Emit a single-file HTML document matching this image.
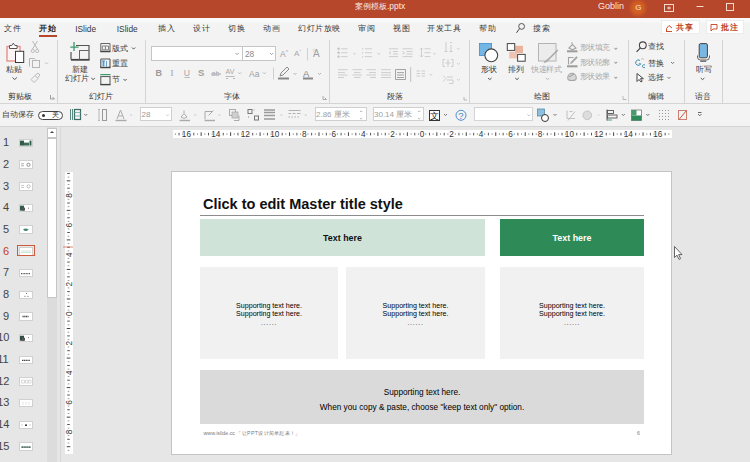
<!DOCTYPE html>
<html><head><meta charset="utf-8">
<style>
*{margin:0;padding:0;box-sizing:border-box}
html,body{width:750px;height:462px;overflow:hidden;background:#e6e6e6;font-family:"Liberation Sans",sans-serif;color:#444}
.a{position:absolute}
.t{position:absolute;white-space:nowrap;line-height:1;z-index:2}
#title{left:0;top:0;width:750px;height:18px;background:#b7472a}
#tabs{left:0;top:18px;width:750px;height:19px;background:linear-gradient(#f9f8f8 0,#f9f8f8 4px,#f3f3f3 5px)}
#ribbon{left:0;top:37px;width:750px;height:66px;background:#f3f3f3}
#qat{left:0;top:103px;width:750px;height:24px;background:#f3f3f3;border-top:1px solid #d4d4d4;border-bottom:1px solid #d4d4d4}
.tab{font-size:8px;color:#383838;top:25px;letter-spacing:0.6px}
.sep{position:absolute;width:1px;background:#d4d4d4}
.gl{font-size:7.5px;color:#333;top:92.8px}
.lbl{font-size:7.8px;color:#3a3a3a}
.dis{color:#a8a8a8}
.chev{position:absolute;width:4px;height:4px;border-right:1px solid #666;border-bottom:1px solid #666;transform:rotate(45deg)}
.dd{position:absolute;width:0;height:0;border-left:2px solid transparent;border-right:2px solid transparent;border-top:2px solid #888}
</style></head><body>
<!-- title bar -->
<div id="title" class="a"></div>
<div class="t" style="left:355px;top:2.3px;font-size:8.4px;color:#fbe9e4">案例模板.pptx</div>
<div class="t" style="left:598px;top:2px;font-size:9px;color:#fbe9e4">Goblin</div>
<div class="a" style="left:628px;top:-2px;width:20px;height:20px;border-radius:50%;background:radial-gradient(circle,#d8621c 0,#d25f22 35%,rgba(183,71,42,0) 70%)"></div>
<div class="t" style="left:635.3px;top:3.8px;font-size:8px;color:#fbe6d8">G</div>

<!-- tabs -->
<div id="tabs" class="a"></div>
<div class="t tab" style="left:4px">文件</div>
<div class="t tab" style="left:39px;font-weight:bold;color:#262626">开始</div>
<div class="a" style="left:39px;top:35px;width:18px;height:2px;background:#b7472a"></div>
<div class="t tab" style="left:75.2px;font-size:8.4px;top:24.8px;letter-spacing:0">ISlide</div>
<div class="t tab" style="left:116.8px;font-size:8.4px;top:24.8px;letter-spacing:0">ISlide</div>
<div class="t tab" style="left:158px">插入</div>
<div class="t tab" style="left:193px">设计</div>
<div class="t tab" style="left:228px">切换</div>
<div class="t tab" style="left:263px">动画</div>
<div class="t tab" style="left:298px">幻灯片放映</div>
<div class="t tab" style="left:358px">审阅</div>
<div class="t tab" style="left:393px">视图</div>
<div class="t tab" style="left:427px">开发工具</div>
<div class="t tab" style="left:479px">帮助</div>
<div class="t tab" style="left:533px">搜索</div>
<div class="a" style="left:661px;top:20px;width:38.5px;height:14px;background:#fff;border:1px solid #ececec"></div>
<div class="t" style="left:676px;top:23.5px;font-size:8px;color:#b8442a;letter-spacing:0.8px;font-weight:bold">共享</div>
<div class="a" style="left:705.5px;top:20px;width:38.5px;height:14px;background:#fff;border:1px solid #ececec"></div>
<div class="t" style="left:721.3px;top:23.5px;font-size:8px;color:#b8442a;letter-spacing:0.8px;font-weight:bold">批注</div>

<!-- ribbon -->
<div id="ribbon" class="a"></div>
<div class="sep" style="left:57px;top:40px;height:62.5px"></div>
<div class="sep" style="left:145px;top:40px;height:62.5px"></div>
<div class="sep" style="left:329px;top:40px;height:62.5px"></div>
<div class="sep" style="left:469px;top:40px;height:62.5px"></div>
<div class="sep" style="left:628px;top:40px;height:62.5px"></div>
<div class="sep" style="left:684px;top:40px;height:62.5px"></div>
<div class="sep" style="left:722px;top:40px;height:62.5px"></div>
<div class="t gl" style="left:8.4px">剪贴板</div>
<div class="t gl" style="left:89.2px">幻灯片</div>
<div class="t gl" style="left:224.3px">字体</div>
<div class="t gl" style="left:386.6px">段落</div>
<div class="t gl" style="left:534.3px">绘图</div>
<div class="t gl" style="left:648.2px">编辑</div>
<div class="t gl" style="left:695.0px">语音</div>


<div class="t lbl" style="left:5.6px;top:65.7px">粘贴</div>
<div class="t lbl" style="left:71.5px;top:65.5px">新建</div>
<div class="t lbl" style="left:64.5px;top:75.2px">幻灯片</div>
<div class="t lbl" style="left:111.6px;top:44.7px">版式</div>
<div class="t lbl" style="left:111.6px;top:60.4px">重置</div>
<div class="t lbl" style="left:112.1px;top:76.1px">节</div>
<div class="t" style="left:245px;top:50px;font-size:8.3px;color:#8a8a8a">28</div>
<div class="t" style="left:280px;top:49.5px;font-size:8.5px;color:#a0a0a0">A<span style="font-size:5px;vertical-align:top">^</span></div>
<div class="t" style="left:294px;top:49.5px;font-size:8px;color:#a8a8a8">A<span style="font-size:5px;vertical-align:top">ˇ</span></div>
<div class="t" style="left:313px;top:48.5px;font-size:10px;color:#a0a0a0">A</div>
<div class="t" style="left:155.5px;top:68.5px;font-size:9px;font-weight:bold;color:#9a9a9a">B</div>
<div class="t" style="left:170.5px;top:68.5px;font-size:9px;font-family:'Liberation Serif',serif;color:#a0a0a0">I</div>
<div class="t" style="left:183.8px;top:68.5px;font-size:8.6px;color:#a8a8a8">U</div>
<div class="t" style="left:198px;top:68px;font-size:9.5px;font-weight:bold;color:#a0a0a0">S</div>
<div class="t" style="left:211.5px;top:70px;font-size:7px;color:#a8a8a8">ab</div>
<div class="t" style="left:225.5px;top:67.5px;font-size:7px;color:#a8a8a8">AV</div>
<div class="t" style="left:249px;top:69.5px;font-size:8.5px;color:#a0a0a0">Aa</div>
<div class="t" style="left:303px;top:68.5px;font-size:9.5px;color:#888">A</div>
<div class="t lbl" style="left:480.6px;top:65.9px">形状</div>
<div class="t lbl" style="left:507.6px;top:65.9px">排列</div>
<div class="t lbl dis" style="left:531.0px;top:65.9px;color:#aaaaaa;letter-spacing:-0.35px">快速样式</div>
<div class="t lbl" style="left:579.5px;top:44.2px;color:#aaaaaa;letter-spacing:-0.35px">形状填充</div>
<div class="t lbl" style="left:579.5px;top:59.3px;color:#aaaaaa;letter-spacing:-0.35px">形状轮廓</div>
<div class="t lbl" style="left:579.5px;top:72.9px;color:#aaaaaa;letter-spacing:-0.35px">形状效果</div>
<div class="t lbl" style="left:648.2px;top:43.4px">查找</div>
<div class="t lbl" style="left:648.2px;top:59.6px">替换</div>
<div class="t lbl" style="left:648.2px;top:74.0px">选择</div>
<div class="t lbl" style="left:695.6px;top:66.2px">听写</div>

<!-- qat -->
<div id="qat" class="a"></div>
<div class="t" style="left:1.5px;top:111px;font-size:7.8px;color:#444">自动保存</div>


<div class="a" style="left:37.5px;top:110.5px;width:25px;height:9px;border:1px solid #444;border-radius:5px;background:#fff"></div>
<div class="a" style="left:41.5px;top:113.5px;width:3.5px;height:3.5px;border-radius:50%;background:#333"></div>
<div class="t" style="left:51.5px;top:111px;font-size:7px;color:#333">关</div>
<div class="a" style="left:139.5px;top:107.3px;width:32.5px;height:14px;border:1px solid #cfcfcf;background:#fff"></div>
<div class="t" style="left:141.5px;top:111px;font-size:8px;color:#999">28</div>
<div class="a" style="left:314.5px;top:107.3px;width:52px;height:14px;border:1px solid #cfcfcf;background:#fff"></div>
<div class="t" style="left:316px;top:110.5px;font-size:8px;color:#a0a0a0">2.86 厘米</div>
<div class="a" style="left:372.5px;top:107.3px;width:51px;height:14px;border:1px solid #cfcfcf;background:#fff"></div>
<div class="t" style="left:374px;top:110.5px;font-size:8px;color:#a0a0a0">30.14 厘米</div>
<div class="a" style="left:474px;top:107.3px;width:58.5px;height:14px;border:1px solid #d4d4d4;background:#fff"></div>

<!-- content -->
<div class="a" style="left:60px;top:127px;width:1px;height:335px;background:#d8d8d8"></div>
<div class="t" style="left:3px;top:137.1px;font-size:11px;color:#444">1</div>
<div class="a" style="left:18.5px;top:138.7px;width:14.5px;height:8.6px;background:#fff;border:0.5px solid #d0d0d0"></div>
<div class="t" style="left:3px;top:158.8px;font-size:11px;color:#444">2</div>
<div class="a" style="left:18.5px;top:160.4px;width:14.5px;height:8.6px;background:#fff;border:0.5px solid #d0d0d0"></div>
<div class="t" style="left:3px;top:180.5px;font-size:11px;color:#444">3</div>
<div class="a" style="left:18.5px;top:182.1px;width:14.5px;height:8.6px;background:#fff;border:0.5px solid #d0d0d0"></div>
<div class="t" style="left:3px;top:202.1px;font-size:11px;color:#444">4</div>
<div class="a" style="left:18.5px;top:203.7px;width:14.5px;height:8.6px;background:#fff;border:0.5px solid #d0d0d0"></div>
<div class="t" style="left:3px;top:223.8px;font-size:11px;color:#444">5</div>
<div class="a" style="left:18.5px;top:225.4px;width:14.5px;height:8.6px;background:#fff;border:0.5px solid #d0d0d0"></div>
<div class="t" style="left:3px;top:245.5px;font-size:11px;color:#c43e1c">6</div>
<div class="a" style="left:18.5px;top:247.1px;width:14.5px;height:8.6px;background:#fff;border:0.5px solid #d0d0d0"></div>
<div class="t" style="left:3px;top:267.2px;font-size:11px;color:#444">7</div>
<div class="a" style="left:18.5px;top:268.8px;width:14.5px;height:8.6px;background:#fff;border:0.5px solid #d0d0d0"></div>
<div class="t" style="left:3px;top:288.9px;font-size:11px;color:#444">8</div>
<div class="a" style="left:18.5px;top:290.5px;width:14.5px;height:8.6px;background:#fff;border:0.5px solid #d0d0d0"></div>
<div class="t" style="left:3px;top:310.5px;font-size:11px;color:#444">9</div>
<div class="a" style="left:18.5px;top:312.1px;width:14.5px;height:8.6px;background:#fff;border:0.5px solid #d0d0d0"></div>
<div class="t" style="left:-2.8px;top:332.2px;font-size:11px;color:#444">10</div>
<div class="a" style="left:18.5px;top:333.8px;width:14.5px;height:8.6px;background:#fff;border:0.5px solid #d0d0d0"></div>
<div class="t" style="left:-2.8px;top:353.9px;font-size:11px;color:#444">11</div>
<div class="a" style="left:18.5px;top:355.5px;width:14.5px;height:8.6px;background:#fff;border:0.5px solid #d0d0d0"></div>
<div class="t" style="left:-2.8px;top:375.6px;font-size:11px;color:#444">12</div>
<div class="a" style="left:18.5px;top:377.2px;width:14.5px;height:8.6px;background:#fff;border:0.5px solid #d0d0d0"></div>
<div class="t" style="left:-2.8px;top:397.3px;font-size:11px;color:#444">13</div>
<div class="a" style="left:18.5px;top:398.9px;width:14.5px;height:8.6px;background:#fff;border:0.5px solid #d0d0d0"></div>
<div class="t" style="left:-2.8px;top:418.9px;font-size:11px;color:#444">14</div>
<div class="a" style="left:18.5px;top:420.5px;width:14.5px;height:8.6px;background:#fff;border:0.5px solid #d0d0d0"></div>
<div class="t" style="left:-2.8px;top:440.6px;font-size:11px;color:#444">15</div>
<div class="a" style="left:18.5px;top:442.2px;width:14.5px;height:8.6px;background:#fff;border:0.5px solid #d0d0d0"></div>
<div class="a" style="left:16.8px;top:244.7px;width:18.6px;height:11.4px;border:1.6px solid #d05a3c"></div>
<div class="a" style="left:47px;top:127px;width:10px;height:335px;background:#dcdcdc"></div>
<div class="a" style="left:47px;top:128px;width:10px;height:10px;background:#fff;border:1px solid #c6c6c6"></div>
<div class="a" style="left:47px;top:138px;width:10px;height:160px;background:#fff;border:1px solid #c6c6c6"></div>
<div class="a" style="left:50px;top:131px;width:0;height:0;border-left:2px solid transparent;border-right:2px solid transparent;border-bottom:2.5px solid #444"></div>
<svg class="a" style="left:0;top:127px" width="750" height="335" viewBox="0 127 750 335">
<rect x="173" y="130" width="499" height="8" fill="#fff"/>
<rect x="174.87" y="133.3" width="1" height="1.6" fill="#999"/>
<rect x="178.56" y="132.8" width="1" height="2.6" fill="#555"/>
<rect x="182.24" y="133.3" width="1" height="1.6" fill="#999"/>
<text x="186.42" y="137.2" font-size="8.2" text-anchor="middle" fill="#333" font-family="Liberation Sans">16</text>
<rect x="189.60" y="133.3" width="1" height="1.6" fill="#999"/>
<rect x="193.29" y="132.8" width="1" height="2.6" fill="#555"/>
<rect x="196.97" y="133.3" width="1" height="1.6" fill="#999"/>
<rect x="200.65" y="132.3" width="1" height="3.6" fill="#444"/>
<rect x="204.33" y="133.3" width="1" height="1.6" fill="#999"/>
<rect x="208.02" y="132.8" width="1" height="2.6" fill="#555"/>
<rect x="211.70" y="133.3" width="1" height="1.6" fill="#999"/>
<text x="215.88" y="137.2" font-size="8.2" text-anchor="middle" fill="#333" font-family="Liberation Sans">14</text>
<rect x="219.06" y="133.3" width="1" height="1.6" fill="#999"/>
<rect x="222.75" y="132.8" width="1" height="2.6" fill="#555"/>
<rect x="226.43" y="133.3" width="1" height="1.6" fill="#999"/>
<rect x="230.11" y="132.3" width="1" height="3.6" fill="#444"/>
<rect x="233.79" y="133.3" width="1" height="1.6" fill="#999"/>
<rect x="237.48" y="132.8" width="1" height="2.6" fill="#555"/>
<rect x="241.16" y="133.3" width="1" height="1.6" fill="#999"/>
<text x="245.34" y="137.2" font-size="8.2" text-anchor="middle" fill="#333" font-family="Liberation Sans">12</text>
<rect x="248.52" y="133.3" width="1" height="1.6" fill="#999"/>
<rect x="252.21" y="132.8" width="1" height="2.6" fill="#555"/>
<rect x="255.89" y="133.3" width="1" height="1.6" fill="#999"/>
<rect x="259.57" y="132.3" width="1" height="3.6" fill="#444"/>
<rect x="263.25" y="133.3" width="1" height="1.6" fill="#999"/>
<rect x="266.94" y="132.8" width="1" height="2.6" fill="#555"/>
<rect x="270.62" y="133.3" width="1" height="1.6" fill="#999"/>
<text x="274.80" y="137.2" font-size="8.2" text-anchor="middle" fill="#333" font-family="Liberation Sans">10</text>
<rect x="277.98" y="133.3" width="1" height="1.6" fill="#999"/>
<rect x="281.67" y="132.8" width="1" height="2.6" fill="#555"/>
<rect x="285.35" y="133.3" width="1" height="1.6" fill="#999"/>
<rect x="289.03" y="132.3" width="1" height="3.6" fill="#444"/>
<rect x="292.71" y="133.3" width="1" height="1.6" fill="#999"/>
<rect x="296.40" y="132.8" width="1" height="2.6" fill="#555"/>
<rect x="300.08" y="133.3" width="1" height="1.6" fill="#999"/>
<text x="304.26" y="137.2" font-size="8.2" text-anchor="middle" fill="#333" font-family="Liberation Sans">8</text>
<rect x="307.44" y="133.3" width="1" height="1.6" fill="#999"/>
<rect x="311.12" y="132.8" width="1" height="2.6" fill="#555"/>
<rect x="314.81" y="133.3" width="1" height="1.6" fill="#999"/>
<rect x="318.49" y="132.3" width="1" height="3.6" fill="#444"/>
<rect x="322.17" y="133.3" width="1" height="1.6" fill="#999"/>
<rect x="325.86" y="132.8" width="1" height="2.6" fill="#555"/>
<rect x="329.54" y="133.3" width="1" height="1.6" fill="#999"/>
<text x="333.72" y="137.2" font-size="8.2" text-anchor="middle" fill="#333" font-family="Liberation Sans">6</text>
<rect x="336.90" y="133.3" width="1" height="1.6" fill="#999"/>
<rect x="340.59" y="132.8" width="1" height="2.6" fill="#555"/>
<rect x="344.27" y="133.3" width="1" height="1.6" fill="#999"/>
<rect x="347.95" y="132.3" width="1" height="3.6" fill="#444"/>
<rect x="351.63" y="133.3" width="1" height="1.6" fill="#999"/>
<rect x="355.32" y="132.8" width="1" height="2.6" fill="#555"/>
<rect x="359.00" y="133.3" width="1" height="1.6" fill="#999"/>
<text x="363.18" y="137.2" font-size="8.2" text-anchor="middle" fill="#333" font-family="Liberation Sans">4</text>
<rect x="366.36" y="133.3" width="1" height="1.6" fill="#999"/>
<rect x="370.05" y="132.8" width="1" height="2.6" fill="#555"/>
<rect x="373.73" y="133.3" width="1" height="1.6" fill="#999"/>
<rect x="377.41" y="132.3" width="1" height="3.6" fill="#444"/>
<rect x="381.09" y="133.3" width="1" height="1.6" fill="#999"/>
<rect x="384.78" y="132.8" width="1" height="2.6" fill="#555"/>
<rect x="388.46" y="133.3" width="1" height="1.6" fill="#999"/>
<text x="392.64" y="137.2" font-size="8.2" text-anchor="middle" fill="#333" font-family="Liberation Sans">2</text>
<rect x="395.82" y="133.3" width="1" height="1.6" fill="#999"/>
<rect x="399.50" y="132.8" width="1" height="2.6" fill="#555"/>
<rect x="403.19" y="133.3" width="1" height="1.6" fill="#999"/>
<rect x="406.87" y="132.3" width="1" height="3.6" fill="#444"/>
<rect x="410.55" y="133.3" width="1" height="1.6" fill="#999"/>
<rect x="414.24" y="132.8" width="1" height="2.6" fill="#555"/>
<rect x="417.92" y="133.3" width="1" height="1.6" fill="#999"/>
<text x="422.10" y="137.2" font-size="8.2" text-anchor="middle" fill="#333" font-family="Liberation Sans">0</text>
<rect x="425.28" y="133.3" width="1" height="1.6" fill="#999"/>
<rect x="428.97" y="132.8" width="1" height="2.6" fill="#555"/>
<rect x="432.65" y="133.3" width="1" height="1.6" fill="#999"/>
<rect x="436.33" y="132.3" width="1" height="3.6" fill="#444"/>
<rect x="440.01" y="133.3" width="1" height="1.6" fill="#999"/>
<rect x="443.70" y="132.8" width="1" height="2.6" fill="#555"/>
<rect x="447.38" y="133.3" width="1" height="1.6" fill="#999"/>
<text x="451.56" y="137.2" font-size="8.2" text-anchor="middle" fill="#333" font-family="Liberation Sans">2</text>
<rect x="454.74" y="133.3" width="1" height="1.6" fill="#999"/>
<rect x="458.43" y="132.8" width="1" height="2.6" fill="#555"/>
<rect x="462.11" y="133.3" width="1" height="1.6" fill="#999"/>
<rect x="465.79" y="132.3" width="1" height="3.6" fill="#444"/>
<rect x="469.47" y="133.3" width="1" height="1.6" fill="#999"/>
<rect x="473.16" y="132.8" width="1" height="2.6" fill="#555"/>
<rect x="476.84" y="133.3" width="1" height="1.6" fill="#999"/>
<text x="481.02" y="137.2" font-size="8.2" text-anchor="middle" fill="#333" font-family="Liberation Sans">4</text>
<rect x="484.20" y="133.3" width="1" height="1.6" fill="#999"/>
<rect x="487.88" y="132.8" width="1" height="2.6" fill="#555"/>
<rect x="491.57" y="133.3" width="1" height="1.6" fill="#999"/>
<rect x="495.25" y="132.3" width="1" height="3.6" fill="#444"/>
<rect x="498.93" y="133.3" width="1" height="1.6" fill="#999"/>
<rect x="502.62" y="132.8" width="1" height="2.6" fill="#555"/>
<rect x="506.30" y="133.3" width="1" height="1.6" fill="#999"/>
<text x="510.48" y="137.2" font-size="8.2" text-anchor="middle" fill="#333" font-family="Liberation Sans">6</text>
<rect x="513.66" y="133.3" width="1" height="1.6" fill="#999"/>
<rect x="517.35" y="132.8" width="1" height="2.6" fill="#555"/>
<rect x="521.03" y="133.3" width="1" height="1.6" fill="#999"/>
<rect x="524.71" y="132.3" width="1" height="3.6" fill="#444"/>
<rect x="528.39" y="133.3" width="1" height="1.6" fill="#999"/>
<rect x="532.08" y="132.8" width="1" height="2.6" fill="#555"/>
<rect x="535.76" y="133.3" width="1" height="1.6" fill="#999"/>
<text x="539.94" y="137.2" font-size="8.2" text-anchor="middle" fill="#333" font-family="Liberation Sans">8</text>
<rect x="543.12" y="133.3" width="1" height="1.6" fill="#999"/>
<rect x="546.81" y="132.8" width="1" height="2.6" fill="#555"/>
<rect x="550.49" y="133.3" width="1" height="1.6" fill="#999"/>
<rect x="554.17" y="132.3" width="1" height="3.6" fill="#444"/>
<rect x="557.85" y="133.3" width="1" height="1.6" fill="#999"/>
<rect x="561.54" y="132.8" width="1" height="2.6" fill="#555"/>
<rect x="565.22" y="133.3" width="1" height="1.6" fill="#999"/>
<text x="569.40" y="137.2" font-size="8.2" text-anchor="middle" fill="#333" font-family="Liberation Sans">10</text>
<rect x="572.58" y="133.3" width="1" height="1.6" fill="#999"/>
<rect x="576.26" y="132.8" width="1" height="2.6" fill="#555"/>
<rect x="579.95" y="133.3" width="1" height="1.6" fill="#999"/>
<rect x="583.63" y="132.3" width="1" height="3.6" fill="#444"/>
<rect x="587.31" y="133.3" width="1" height="1.6" fill="#999"/>
<rect x="591.00" y="132.8" width="1" height="2.6" fill="#555"/>
<rect x="594.68" y="133.3" width="1" height="1.6" fill="#999"/>
<text x="598.86" y="137.2" font-size="8.2" text-anchor="middle" fill="#333" font-family="Liberation Sans">12</text>
<rect x="602.04" y="133.3" width="1" height="1.6" fill="#999"/>
<rect x="605.73" y="132.8" width="1" height="2.6" fill="#555"/>
<rect x="609.41" y="133.3" width="1" height="1.6" fill="#999"/>
<rect x="613.09" y="132.3" width="1" height="3.6" fill="#444"/>
<rect x="616.77" y="133.3" width="1" height="1.6" fill="#999"/>
<rect x="620.46" y="132.8" width="1" height="2.6" fill="#555"/>
<rect x="624.14" y="133.3" width="1" height="1.6" fill="#999"/>
<text x="628.32" y="137.2" font-size="8.2" text-anchor="middle" fill="#333" font-family="Liberation Sans">14</text>
<rect x="631.50" y="133.3" width="1" height="1.6" fill="#999"/>
<rect x="635.19" y="132.8" width="1" height="2.6" fill="#555"/>
<rect x="638.87" y="133.3" width="1" height="1.6" fill="#999"/>
<rect x="642.55" y="132.3" width="1" height="3.6" fill="#444"/>
<rect x="646.23" y="133.3" width="1" height="1.6" fill="#999"/>
<rect x="649.91" y="132.8" width="1" height="2.6" fill="#555"/>
<rect x="653.60" y="133.3" width="1" height="1.6" fill="#999"/>
<text x="657.78" y="137.2" font-size="8.2" text-anchor="middle" fill="#333" font-family="Liberation Sans">16</text>
<rect x="660.96" y="133.3" width="1" height="1.6" fill="#999"/>
<rect x="664.64" y="132.8" width="1" height="2.6" fill="#555"/>
<rect x="668.33" y="133.3" width="1" height="1.6" fill="#999"/>
<rect x="65" y="172" width="8" height="282" fill="#fff"/>
<rect x="67.2" y="172.94" width="2.6" height="1" fill="#555"/>
<rect x="67.7" y="176.63" width="1.6" height="1" fill="#999"/>
<rect x="66.7" y="180.32" width="3.6" height="1" fill="#444"/>
<rect x="67.7" y="184.01" width="1.6" height="1" fill="#999"/>
<rect x="67.2" y="187.70" width="2.6" height="1" fill="#555"/>
<rect x="67.7" y="191.40" width="1.6" height="1" fill="#999"/>
<text x="0" y="0" font-size="8.2" text-anchor="middle" fill="#333" font-family="Liberation Sans" transform="translate(71.6 195.59) rotate(-90)">8</text>
<rect x="67.7" y="198.78" width="1.6" height="1" fill="#999"/>
<rect x="67.2" y="202.48" width="2.6" height="1" fill="#555"/>
<rect x="67.7" y="206.17" width="1.6" height="1" fill="#999"/>
<rect x="66.7" y="209.86" width="3.6" height="1" fill="#444"/>
<rect x="67.7" y="213.55" width="1.6" height="1" fill="#999"/>
<rect x="67.2" y="217.25" width="2.6" height="1" fill="#555"/>
<rect x="67.7" y="220.94" width="1.6" height="1" fill="#999"/>
<text x="0" y="0" font-size="8.2" text-anchor="middle" fill="#333" font-family="Liberation Sans" transform="translate(71.6 225.13) rotate(-90)">6</text>
<rect x="67.7" y="228.32" width="1.6" height="1" fill="#999"/>
<rect x="67.2" y="232.01" width="2.6" height="1" fill="#555"/>
<rect x="67.7" y="235.71" width="1.6" height="1" fill="#999"/>
<rect x="66.7" y="239.40" width="3.6" height="1" fill="#444"/>
<rect x="67.7" y="243.09" width="1.6" height="1" fill="#999"/>
<rect x="67.2" y="246.78" width="2.6" height="1" fill="#555"/>
<rect x="67.7" y="250.48" width="1.6" height="1" fill="#999"/>
<text x="0" y="0" font-size="8.2" text-anchor="middle" fill="#333" font-family="Liberation Sans" transform="translate(71.6 254.67) rotate(-90)">4</text>
<rect x="67.7" y="257.86" width="1.6" height="1" fill="#999"/>
<rect x="67.2" y="261.56" width="2.6" height="1" fill="#555"/>
<rect x="67.7" y="265.25" width="1.6" height="1" fill="#999"/>
<rect x="66.7" y="268.94" width="3.6" height="1" fill="#444"/>
<rect x="67.7" y="272.63" width="1.6" height="1" fill="#999"/>
<rect x="67.2" y="276.32" width="2.6" height="1" fill="#555"/>
<rect x="67.7" y="280.02" width="1.6" height="1" fill="#999"/>
<text x="0" y="0" font-size="8.2" text-anchor="middle" fill="#333" font-family="Liberation Sans" transform="translate(71.6 284.21) rotate(-90)">2</text>
<rect x="67.7" y="287.40" width="1.6" height="1" fill="#999"/>
<rect x="67.2" y="291.10" width="2.6" height="1" fill="#555"/>
<rect x="67.7" y="294.79" width="1.6" height="1" fill="#999"/>
<rect x="66.7" y="298.48" width="3.6" height="1" fill="#444"/>
<rect x="67.7" y="302.17" width="1.6" height="1" fill="#999"/>
<rect x="67.2" y="305.87" width="2.6" height="1" fill="#555"/>
<rect x="67.7" y="309.56" width="1.6" height="1" fill="#999"/>
<text x="0" y="0" font-size="8.2" text-anchor="middle" fill="#333" font-family="Liberation Sans" transform="translate(71.6 313.75) rotate(-90)">0</text>
<rect x="67.7" y="316.94" width="1.6" height="1" fill="#999"/>
<rect x="67.2" y="320.63" width="2.6" height="1" fill="#555"/>
<rect x="67.7" y="324.33" width="1.6" height="1" fill="#999"/>
<rect x="66.7" y="328.02" width="3.6" height="1" fill="#444"/>
<rect x="67.7" y="331.71" width="1.6" height="1" fill="#999"/>
<rect x="67.2" y="335.40" width="2.6" height="1" fill="#555"/>
<rect x="67.7" y="339.10" width="1.6" height="1" fill="#999"/>
<text x="0" y="0" font-size="8.2" text-anchor="middle" fill="#333" font-family="Liberation Sans" transform="translate(71.6 343.29) rotate(-90)">2</text>
<rect x="67.7" y="346.48" width="1.6" height="1" fill="#999"/>
<rect x="67.2" y="350.18" width="2.6" height="1" fill="#555"/>
<rect x="67.7" y="353.87" width="1.6" height="1" fill="#999"/>
<rect x="66.7" y="357.56" width="3.6" height="1" fill="#444"/>
<rect x="67.7" y="361.25" width="1.6" height="1" fill="#999"/>
<rect x="67.2" y="364.94" width="2.6" height="1" fill="#555"/>
<rect x="67.7" y="368.64" width="1.6" height="1" fill="#999"/>
<text x="0" y="0" font-size="8.2" text-anchor="middle" fill="#333" font-family="Liberation Sans" transform="translate(71.6 372.83) rotate(-90)">4</text>
<rect x="67.7" y="376.02" width="1.6" height="1" fill="#999"/>
<rect x="67.2" y="379.72" width="2.6" height="1" fill="#555"/>
<rect x="67.7" y="383.41" width="1.6" height="1" fill="#999"/>
<rect x="66.7" y="387.10" width="3.6" height="1" fill="#444"/>
<rect x="67.7" y="390.79" width="1.6" height="1" fill="#999"/>
<rect x="67.2" y="394.49" width="2.6" height="1" fill="#555"/>
<rect x="67.7" y="398.18" width="1.6" height="1" fill="#999"/>
<text x="0" y="0" font-size="8.2" text-anchor="middle" fill="#333" font-family="Liberation Sans" transform="translate(71.6 402.37) rotate(-90)">6</text>
<rect x="67.7" y="405.56" width="1.6" height="1" fill="#999"/>
<rect x="67.2" y="409.25" width="2.6" height="1" fill="#555"/>
<rect x="67.7" y="412.95" width="1.6" height="1" fill="#999"/>
<rect x="66.7" y="416.64" width="3.6" height="1" fill="#444"/>
<rect x="67.7" y="420.33" width="1.6" height="1" fill="#999"/>
<rect x="67.2" y="424.02" width="2.6" height="1" fill="#555"/>
<rect x="67.7" y="427.72" width="1.6" height="1" fill="#999"/>
<text x="0" y="0" font-size="8.2" text-anchor="middle" fill="#333" font-family="Liberation Sans" transform="translate(71.6 431.91) rotate(-90)">8</text>
<rect x="67.7" y="435.10" width="1.6" height="1" fill="#999"/>
<rect x="67.2" y="438.80" width="2.6" height="1" fill="#555"/>
<rect x="67.7" y="442.49" width="1.6" height="1" fill="#999"/>
<rect x="66.7" y="446.18" width="3.6" height="1" fill="#444"/>
<rect x="67.7" y="449.87" width="1.6" height="1" fill="#999"/>
<rect x="63" y="246.5" width="10" height="1" fill="#d86a50" opacity="0.8"/>
</svg>
<svg class="a" style="left:0;top:127px" width="60" height="335" viewBox="0 127 60 335">
<rect x="20" y="140.60000000000002" width="4" height="5" fill="#2f5e48"/><rect x="24" y="142.60000000000002" width="5" height="3" fill="#3f6e58"/><rect x="29.5" y="140.60000000000002" width="2" height="5" fill="#2f5e48"/>
<path d="M21 163.78000000000003h3M21 165.78000000000003h3" stroke="#999" stroke-width="0.8"/><circle cx="28.5" cy="164.78000000000003" r="1.6" fill="none" stroke="#777" stroke-width="0.8"/>
<path d="M21 185.46000000000004h3M21 187.46000000000004h3" stroke="#bbb" stroke-width="0.8"/><circle cx="28.5" cy="186.46000000000004" r="1.6" fill="none" stroke="#aaa" stroke-width="0.8"/>
<rect x="20" y="205.64000000000001" width="4" height="5" fill="#2f5e48"/><rect x="22" y="207.64000000000001" width="3" height="3" fill="#555"/><rect x="28" y="207.64000000000001" width="1" height="1" fill="#777"/>
<path d="M23 229.82000000000002q2.8-2.5 5.6 0q-2.8 2.5-5.6 0z" fill="#3d8a6a"/>
<path d="M21 251.00000000000003h10M21 252.50000000000003h10" stroke="#cfe3d8" stroke-width="1"/>
<path d="M21 273.68h9" stroke="#555" stroke-width="1.2" stroke-dasharray="1 0.6"/>
<path d="M24.5 296.36h1M26 293.36h1M27.5 296.36h1" stroke="#666" stroke-width="1"/>
<path d="M22.5 316.54h6" stroke="#444" stroke-width="1.6" stroke-dasharray="1.2 0.5"/>
<rect x="20" y="335.72" width="4" height="5" fill="#2f4e40"/><rect x="22" y="337.72" width="3" height="3" fill="#555"/><rect x="28" y="337.22" width="1" height="1" fill="#777"/>
<path d="M22 360.40000000000003h8" stroke="#444" stroke-width="1.4" stroke-dasharray="1.3 0.5"/>
<path d="M21.5 380.08h3v3h-3zM25.5 380.08h2.5v3h-2.5zM28.5 380.08h2.5v3h-2.5z" fill="none" stroke="#c4c4c4" stroke-width="0.6"/>
<path d="M23 401.76v3M26 401.76v3M29 401.76v3" stroke="#d4d4d4" stroke-width="0.7"/>
<rect x="25" y="424.44" width="2" height="1.5" fill="#333"/><path d="M21 424.94h2M29 424.94h2" stroke="#bbb" stroke-width="0.6"/>
<path d="M21.5 447.12h9" stroke="#3f5f55" stroke-width="1.8" stroke-dasharray="1.4 0.5"/>
</svg>
<!-- h ruler -->

<!-- v ruler -->


<!-- slide -->
<div class="a" style="left:171px;top:171px;width:501px;height:284px;background:#fff;border:1px solid #c4c4c4"></div>
<div class="t" style="left:203px;top:197.3px;font-size:14.5px;font-weight:bold;color:#111">Click to edit Master title style</div>
<div class="a" style="left:200px;top:215px;width:444px;height:1px;background:#8c8c8c"></div>
<div class="a" style="left:200px;top:219px;width:285px;height:37px;background:#cfe3d8"></div>
<div class="a" style="left:500px;top:219px;width:144px;height:37px;background:#2e8a57"></div>
<div class="t" style="left:200px;top:233.5px;width:285px;text-align:center;font-size:8.9px;font-weight:bold;color:#111">Text here</div>
<div class="t" style="left:500px;top:233.5px;width:144px;text-align:center;font-size:8.9px;font-weight:bold;color:#fff">Text here</div>
<div class="a" style="left:200px;top:267px;width:138px;height:92px;background:#f1f1f1"></div>
<div class="a" style="left:346px;top:267px;width:139px;height:92px;background:#f1f1f1"></div>
<div class="a" style="left:500px;top:267px;width:144px;height:92px;background:#f1f1f1"></div>
<div class="a" style="left:200px;top:370.3px;width:444px;height:53.5px;background:#d9dad9"></div>
<div class="t" style="left:200px;top:388.9px;width:444px;text-align:center;font-size:8.25px;color:#000">Supporting text here.</div>
<div class="t" style="left:200px;top:404px;width:444px;text-align:center;font-size:8.25px;color:#000">When you copy &amp; paste, choose "keep text only" option.</div>

<svg class="a" style="left:0;top:0" width="750" height="127" viewBox="0 0 750 127">
<!-- title bar icons -->
<rect x="664.5" y="4.5" width="9" height="7" fill="none" stroke="#f6d9d0" stroke-width="1"/>
<path d="M667 8h4M669 6.5v3" stroke="#f6d9d0" stroke-width="1"/>
<path d="M696.5 6.5h7" stroke="#f6d9d0" stroke-width="1"/>
<rect x="726.5" y="3.5" width="7" height="7" fill="none" stroke="#f6d9d0" stroke-width="1"/>
<!-- search icon -->
<circle cx="521.6" cy="26.4" r="2.9" fill="none" stroke="#444" stroke-width="0.9"/>
<path d="M519.5 28.6L516.5 32.8" stroke="#444" stroke-width="1"/>
<!-- share/comment icons -->
<path d="M666 31.5h6M666.5 31v-2.5l2.5-3 3 2.5" fill="none" stroke="#c43e1c" stroke-width="0.9"/>
<path d="M711 24.5h6v4.5h-4l-2 2z" fill="none" stroke="#c43e1c" stroke-width="0.9"/>

<!-- paste -->
<rect x="7" y="46.5" width="13" height="14.5" fill="#fdf5f4" stroke="#e3928a" stroke-width="1.4"/>
<path d="M9.5 48.5V45.5h2.2l1.6-2.3 1.6 2.3h2.2v3z" fill="#fff" stroke="#555" stroke-width="1"/>
<rect x="15.5" y="51.3" width="8.2" height="11.2" fill="#fff" stroke="#3a3a3a" stroke-width="1"/>
<path d="M12.5 77.5l2.2 2 2.2-2" fill="none" stroke="#555" stroke-width="1"/>
<!-- cut -->
<path d="M32.5 41l5 8M37.5 41l-5 8" stroke="#b8b8b8" stroke-width="1"/>
<circle cx="32.8" cy="51" r="1.6" fill="none" stroke="#b8b8b8" stroke-width="0.9"/>
<circle cx="37.2" cy="51" r="1.6" fill="none" stroke="#b8b8b8" stroke-width="0.9"/>
<!-- copy -->
<path d="M29.5 66.5v-8h5l1 1" fill="none" stroke="#b5b5b5" stroke-width="1"/>
<rect x="32.5" y="60.5" width="7" height="7" fill="#f3f3f3" stroke="#b5b5b5" stroke-width="1"/>
<path d="M45 62.5l1.5 1.5 1.5-1.5" fill="none" stroke="#bbb" stroke-width="0.9"/>
<!-- painter -->
<path d="M31 79.5l4-4 3 3-4 4z M35 75.5l3-2.5 2 2-2.5 3" fill="none" stroke="#b8b8b8" stroke-width="1"/>
<!-- launcher -->
<path d="M50.5 95v4h4M52.5 97l2 2" fill="none" stroke="#888" stroke-width="0.8"/>

<!-- new slide -->
<path d="M76 45.5h13v14M71 59.5h18.5" fill="none" stroke="#555" stroke-width="1.2"/>
<path d="M71 52v7.5" stroke="#555" stroke-width="1.2"/>
<path d="M71 59.8h18.5" stroke="#444" stroke-width="1.8"/>
<path d="M79.5 50v9.5M79.5 50.5h9.5" fill="none" stroke="#666" stroke-width="1"/>
<path d="M74 42v9M70.3 47.2h8.2" stroke="#3a9a6a" stroke-width="1.3"/>
<path d="M91.3 78l1.8 1.6 1.8-1.6" fill="none" stroke="#555" stroke-width="1"/>
<!-- layout -->
<path d="M100.8 43.5h9.2M100.8 43.5v8M110 43.5v8" fill="none" stroke="#666" stroke-width="1"/>
<path d="M100.3 51.5h10.2" stroke="#444" stroke-width="1.5"/>
<path d="M102.3 46h6.2v3.8h-6.2zM105.4 46v3.8" fill="none" stroke="#777" stroke-width="0.9"/>
<path d="M132 47.5l1.6 1.6 1.6-1.6" fill="none" stroke="#555" stroke-width="1"/>
<!-- reset -->
<path d="M100.8 59h9.2M100.8 59v8.5M110 59v8.5" fill="none" stroke="#555" stroke-width="1.1"/>
<path d="M100.3 67.5h10.2" stroke="#444" stroke-width="1.5"/>
<rect x="101.8" y="60.5" width="3.2" height="6" fill="#a9cde6"/>
<path d="M102 61h3M103.5 61v5.5M106.5 61v5.5" stroke="#4a88b8" stroke-width="0.8"/>
<!-- section -->
<path d="M100.3 74.6h10.2" stroke="#3a9a6a" stroke-width="1.2"/>
<path d="M100.3 76.6h10.2" stroke="#555" stroke-width="1"/>
<path d="M100.8 76.6v8M110 76.6v8" fill="none" stroke="#555" stroke-width="1"/>
<path d="M100.3 84.6h10.2" stroke="#444" stroke-width="1.4"/>
<path d="M123.5 79l1.6 1.6 1.6-1.6" fill="none" stroke="#555" stroke-width="1"/>

<!-- font boxes -->
<rect x="151.5" y="46.5" width="91" height="14" fill="#fff" stroke="#c6c6c6" stroke-width="1"/>
<rect x="242.5" y="46.5" width="33" height="14" fill="#fff" stroke="#c6c6c6" stroke-width="1"/>
<path d="M235.5 53l1.6 1.6 1.6-1.6M270 53l1.6 1.6 1.6-1.6" fill="none" stroke="#999" stroke-width="0.9"/>
<path d="M312.5 50.5l2 -2M313 52l2 -2" stroke="#bbb" stroke-width="0.5"/>
<path d="M273.5 67.5v12M307.5 48v12.5" stroke="#d0d0d0" stroke-width="1"/>
<path d="M238.5 72.5l1.3 1.3 1.3-1.3M263 72.5l1.3 1.3 1.3-1.3M293.5 73l1.5 1.5 1.5-1.5M318 73l1.5 1.5 1.5-1.5" fill="none" stroke="#aaa" stroke-width="0.9"/>
<!-- highlighter -->
<path d="M280 76l1-3 6-6 2 2-6 6z" fill="none" stroke="#8a8a8a" stroke-width="1"/>
<rect x="278" y="77.5" width="11" height="2" fill="#888"/>
<rect x="303" y="77.5" width="10" height="2" fill="#888"/>
<path d="M211 74h10" stroke="#999" stroke-width="0.8"/>
<path d="M225.5 76.5h9M226 78.5h2M233 78.5h2" stroke="#aaa" stroke-width="0.8"/>
<path d="M184.5 77.5h5.5" stroke="#aaa" stroke-width="0.8"/>
<!-- launcher -->
<path d="M323 96v3.5h3.5M324.5 97.5l2 2" fill="none" stroke="#999" stroke-width="0.8"/>

<!-- paragraph icons (faint) -->
<g stroke="#c9c9c9" stroke-width="0.9" fill="none">
<circle cx="338.6" cy="48.8" r="0.9" fill="#bbb"/><circle cx="338.6" cy="52.7" r="0.9" fill="#bbb"/><circle cx="338.6" cy="56.6" r="0.9" fill="#bbb"/>
<path d="M341 48.8h6.5M341 52.7h6.5M341 56.6h6.5"/>
<path d="M353 53l1.4 1.4 1.4-1.4"/>
<path d="M362.7 48v1.5M362.5 52v1.5M362.7 56v1.5M365 48.8h7M365 52.7h7M365 56.6h7"/>
<path d="M377.3 53l1.4 1.4 1.4-1.4"/>
<path d="M389 48.8h9M393 51.5h5M393 54h5M389 56.6h9M391 51.5l-2 1.3 2 1.3"/>
<path d="M402.5 48.8h10M406.5 51.5h6M406.5 54h6M402.5 56.6h10M402.5 51.5l2 1.3-2 1.3"/>
<path d="M421.5 48v9M420 49.5l1.5-1.5 1.5 1.5M420 55.5l1.5 1.5 1.5-1.5M424.5 48.8h6M424.5 52.7h6M424.5 56.6h6"/>
<path d="M433 53l1.4 1.4 1.4-1.4"/>
<path d="M446 42v9.5M451 45v6.5M450 43l1-1 1 1M444.5 51.5h3M449.5 51.5h3"/>
<path d="M457 48l1.4 1.4 1.4-1.4"/>
<path d="M443 59.5v7M453 59.5v7M443 59.5h2M443 66.5h2M451 59.5h2M451 66.5h2M448 59v8M445.5 63h5"/>
<path d="M457 63l1.4 1.4 1.4-1.4"/>
<path d="M443 75.5l3 3-3 3M447 77h6M447 80h6v3.5h-4"/>
<path d="M457 79l1.4 1.4 1.4-1.4"/>
<path d="M338 69.7h9.5M338 72.6h7M338 75h9.5M338 77.5h6"/>
<path d="M352.5 69.7h9.5M354 72.6h6.5M352.5 75h9.5M354 77.5h6.5"/>
<path d="M366.5 69.7h9.5M369 72.6h7M366.5 75h9.5M370 77.5h6"/>
<path d="M381 69.7h10M381 72.6h10M381 75h10M381 77.5h10"/>
<path d="M395.5 69.5h10v10h-10z M397 72.6h7M397 75h7M397 77.5h7" stroke="#9a9a9a"/>
<path d="M410.7 67v15" stroke="#bbb"/>
<path d="M416.5 71h3.5M416.5 73.5h3.5M416.5 76h3.5M421.5 71h3.5M421.5 73.5h3.5M421.5 76h3.5"/>
<path d="M429.5 74l1.4 1.4 1.4-1.4"/>
</g>
<path d="M464 97v3h3" fill="none" stroke="#aaa" stroke-width="0.8"/>

<!-- shapes -->
<rect x="479.5" y="43.5" width="12" height="12" fill="#74b6e6" stroke="#3f8ccc" stroke-width="0.8"/>
<circle cx="491.3" cy="55.3" r="6.4" fill="#fff" stroke="#444" stroke-width="1.1"/>
<path d="M488 78l1.8 1.6 1.8-1.6" fill="none" stroke="#555" stroke-width="1"/>
<!-- arrange -->
<rect x="515.2" y="45.8" width="7.8" height="7.2" fill="#e9b49b"/>
<rect x="509.2" y="51.8" width="7.8" height="6.6" fill="#ecc4b1"/>
<rect x="507.3" y="43.6" width="7.4" height="6.8" fill="#fff" stroke="#444" stroke-width="1"/>
<rect x="517.6" y="54.4" width="7.6" height="6.8" fill="#fff" stroke="#444" stroke-width="1"/>
<path d="M515.2 78l1.8 1.6 1.8-1.6" fill="none" stroke="#555" stroke-width="1"/>
<!-- quick styles -->
<rect x="538.5" y="43.5" width="17.5" height="17.5" fill="#ececec" stroke="#b4b4b4" stroke-width="1"/>
<path d="M557.8 50l-9 9" stroke="#a8a8a8" stroke-width="1.6"/>
<path d="M548.5 58.5l-3 2.5-1.5 1.5 2.8-0.8 2.2-2.2z" fill="#a8a8a8" stroke="#a8a8a8" stroke-width="0.8"/>
<path d="M545.8 78l1.8 1.6 1.8-1.6" fill="none" stroke="#bbb" stroke-width="1"/>
<!-- shape fill/outline/effects -->
<g stroke="#a4a4a4" fill="none" stroke-width="1.1">
<path d="M569 48l3.5-3.5 3.5 3.5-3.5 1.8z M572 44.2v-2"/>
<path d="M568.5 64.5v-7h5M576.5 57l-5 5-1 1.5 1.5-1 5-5z"/>
<path d="M567.8 77.5a4.2 4.2 0 0 1 8.4 0v1a4.2 2 0 0 1-8.4 0z" fill="#d8d8d8"/>
<path d="M569 77l5-3" />
<path d="M614.5 48l1.3 1.3 1.3-1.3M614.5 62l1.3 1.3 1.3-1.3M614.5 77l1.3 1.3 1.3-1.3"/>
</g>
<rect x="567" y="50.3" width="10.5" height="2" fill="#9c9c9c"/>
<rect x="567" y="65.3" width="10.5" height="2" fill="#9c9c9c"/>
<path d="M623 96v3.5h3.5" fill="none" stroke="#aaa" stroke-width="0.8"/>
<!-- find -->
<circle cx="642.8" cy="45.3" r="3.4" fill="none" stroke="#444" stroke-width="1.1"/>
<path d="M640.4 47.8l-3.8 4" stroke="#444" stroke-width="1.2"/>
<!-- replace -->
<path d="M640 60.5a2.7 2.7 0 1 0 0.8 3.3h-2" fill="none" stroke="#3a8fb5" stroke-width="1"/>
<path d="M645 65.2a1.5 1.5 0 1 0 0 2" fill="none" stroke="#3a8fb5" stroke-width="0.9"/>
<path d="M641 59.5l1.5-1 1.5 1" fill="none" stroke="#aaa" stroke-width="0.7"/>
<path d="M671 62l1.6 1.6 1.6-1.6" fill="none" stroke="#666" stroke-width="0.9"/>
<!-- select -->
<path d="M637 73.5v8l2-2 2 2.5 1.2-.8-1.8-2.5h3z" fill="#fff" stroke="#444" stroke-width="1"/>
<path d="M667.5 77l1.5 1.5 1.5-1.5" fill="none" stroke="#666" stroke-width="0.9"/>
<!-- dictate -->
<rect x="699.2" y="43.6" width="8.2" height="14.2" rx="1.5" fill="#78b7e2" stroke="#444" stroke-width="1"/>
<path d="M697.5 55.5v1.5a3 3 0 0 0 3 3h6a3 3 0 0 0 3-3v-1.5" fill="none" stroke="#555" stroke-width="0.9"/>
<path d="M700.2 61.2h6" stroke="#444" stroke-width="1"/>
<path d="M700.8 78l1.8 1.6 1.8-1.6" fill="none" stroke="#555" stroke-width="1"/>
</svg>

<svg class="a" style="left:0;top:103px" width="750" height="24" viewBox="0 103 750 24">
<!-- icon1 table teal -->
<path d="M70.5 109v11M72.5 109v11" stroke="#5a8a80" stroke-width="1"/>
<rect x="74.5" y="109.5" width="6" height="10" fill="none" stroke="#3f6b66" stroke-width="1.2"/>
<path d="M74.5 112.5h6M74.5 116h6" stroke="#6aa" stroke-width="0.8"/>
<path d="M84.3 114l1.5 1.5 1.5-1.5" fill="none" stroke="#666" stroke-width="0.9"/>
<!-- textbox -->
<path d="M98 109.5h2M99 109.5v11M98 120.5h2" stroke="#aaa" stroke-width="0.8"/>
<rect x="102.5" y="109.5" width="4" height="11" fill="none" stroke="#999" stroke-width="1"/>
<!-- A -->
<path d="M117 119l3.5-9 3.5 9M118.5 116h4" fill="none" stroke="#aaa" stroke-width="1"/>
<path d="M115.5 120.5h11" stroke="#aaa" stroke-width="1.4"/>
<path d="M130 115h2" stroke="#bbb" stroke-width="0.8"/>
<path d="M166.3 114.5l1.3 1.3 1.3-1.3" fill="none" stroke="#bbb" stroke-width="0.8"/>
<!-- fill -->
<path d="M181 117l3-3.5 3 3.5-3 1.5z M184 113v-2.5" fill="none" stroke="#aaa" stroke-width="1"/>
<path d="M179.6 120.5h10.4" stroke="#aaa" stroke-width="1.4"/>
<path d="M194.3 115h2" stroke="#bbb" stroke-width="0.8"/>
<!-- outline -->
<path d="M205 119.5v-8h7M213.5 110.5l-5 5" fill="none" stroke="#aaa" stroke-width="1"/>
<path d="M204.7 120.5h10.3" stroke="#aaa" stroke-width="1.4"/>
<path d="M218.5 115h2" stroke="#bbb" stroke-width="0.8"/>
<!-- group -->
<rect x="229.5" y="109.5" width="6" height="6" fill="none" stroke="#aaa" stroke-width="1"/>
<rect x="232" y="112" width="6" height="6" fill="#cfcfcf" stroke="#aaa" stroke-width="0.8"/>
<path d="M234 120.5h5v-5" fill="none" stroke="#aaa" stroke-width="1"/>
<!-- align -->
<rect x="248" y="109.5" width="4" height="4" fill="none" stroke="#777" stroke-width="1"/>
<rect x="254.5" y="116" width="4" height="4" fill="none" stroke="#777" stroke-width="1"/>
<path d="M253.5 110h1.5M248.5 116v2" stroke="#aaa" stroke-width="0.8"/>
<!-- line weight -->
<path d="M264 110h11M264 112.5h11M264 115.5h11M264 119h11" stroke="#9a9a9a" stroke-width="1.6"/>
<path d="M280.5 115h2" stroke="#bbb" stroke-width="0.8"/>
<!-- dash -->
<path d="M288.5 110.5h12M288.5 113.5h2.5M292.5 113.5h3M297 113.5h3.5M288.5 117h1.5M291.5 117h1.5M294.5 117h1.5M297.5 117h1.5" stroke="#aaa" stroke-width="0.9"/>
<path d="M304.7 115h2" stroke="#bbb" stroke-width="0.8"/>
<!-- spinners -->
<path d="M360 112l1.2-1.2 1.2 1.2M360 118l1.2 1.2 1.2-1.2M418 112l1.2-1.2 1.2 1.2M418 118l1.2 1.2 1.2-1.2" fill="none" stroke="#aaa" stroke-width="0.8"/>
<!-- wen -->
<rect x="429.5" y="110.5" width="10" height="10" fill="#fff" stroke="#333" stroke-width="1"/>
<text x="430" y="119" font-size="9" fill="#222" font-family="Liberation Sans">文</text>
<path d="M444 114l1.5 1.5 1.5-1.5" fill="none" stroke="#666" stroke-width="0.9"/>
<!-- help -->
<circle cx="461" cy="115.3" r="5" fill="none" stroke="#3b87c8" stroke-width="0.9"/>
<text x="461" y="119" font-size="9.5" text-anchor="middle" fill="#3b87c8" font-family="Liberation Sans">?</text>
<path d="M527.5 114.5l1.3 1.3 1.3-1.3" fill="none" stroke="#aac" stroke-width="0.8"/>
<!-- shape -->
<rect x="537.5" y="109" width="7" height="7" fill="#8cc0de" stroke="#5a8aa8" stroke-width="0.8"/>
<circle cx="545" cy="118" r="3.5" fill="#fff" stroke="#333" stroke-width="1"/>
<path d="M553.5 114l1.5 1.5 1.5-1.5" fill="none" stroke="#666" stroke-width="0.9"/>
<!-- crop -->
<path d="M567 110.5v8h8M568 120.5l7-9M569.5 111.5h3" fill="none" stroke="#bbb" stroke-width="0.9"/>
<!-- circle -->
<circle cx="587.3" cy="115.3" r="4.3" fill="#ddd" stroke="#c4c4c4" stroke-width="1"/>
<path d="M597.5 115h2" stroke="#ccc" stroke-width="0.8"/>
<!-- align2 -->
<path d="M607 109.5v11" stroke="#555" stroke-width="1"/>
<rect x="607.5" y="110.5" width="6" height="3" fill="none" stroke="#555" stroke-width="0.9"/>
<rect x="607.5" y="115" width="9.5" height="3" fill="none" stroke="#555" stroke-width="0.9"/>
<path d="M607 120h5" stroke="#3a9a6a" stroke-width="0.9"/>
<path d="M621.8 114l1.5 1.5 1.5-1.5" fill="none" stroke="#666" stroke-width="0.9"/>
<!-- green square -->
<rect x="631.5" y="110" width="10" height="10.5" fill="#ffffff" stroke="#777" stroke-width="0.8"/>
<rect x="631.5" y="115.5" width="10" height="5" fill="#2e8a57"/>
<rect x="631.5" y="110" width="5" height="5.5" fill="#4a9a6e"/>
<path d="M646.3 114l1.5 1.5 1.5-1.5" fill="none" stroke="#666" stroke-width="0.9"/>
<!-- dotted grid -->
<g fill="#999">
<rect x="659" y="110" width="1" height="1"/><rect x="662" y="110" width="1" height="1"/><rect x="665" y="110" width="1" height="1"/><rect x="668" y="110" width="1" height="1"/>
<rect x="659" y="113" width="1" height="1"/><rect x="662" y="113" width="1" height="1"/><rect x="665" y="113" width="1" height="1"/><rect x="668" y="113" width="1" height="1"/>
<rect x="659" y="116" width="1" height="1"/><rect x="662" y="116" width="1" height="1"/><rect x="665" y="116" width="1" height="1"/><rect x="668" y="116" width="1" height="1"/>
<rect x="659" y="119" width="1" height="1"/><rect x="662" y="119" width="1" height="1"/><rect x="665" y="119" width="1" height="1"/><rect x="668" y="119" width="1" height="1"/>
</g>
<!-- orange diag -->
<rect x="678.5" y="110.5" width="8" height="9" fill="none" stroke="#d08070" stroke-width="1"/>
<path d="M679 119.5l7.5-9" stroke="#c45a40" stroke-width="1"/>
<!-- customize -->
<path d="M698 112.5h3.5M698 114l1.75 1.75 1.75-1.75" fill="none" stroke="#555" stroke-width="0.9"/>
</svg>

<div class="t" style="left:200px;top:302.2px;width:138px;text-align:center;font-size:7.1px;line-height:8px;color:#000;white-space:normal">Supporting text here.<br>Supporting text here.</div>
<div class="t" style="left:346px;top:302.2px;width:139px;text-align:center;font-size:7.1px;line-height:8px;color:#000;white-space:normal">Supporting text here.<br>Supporting text here.</div>
<div class="t" style="left:500px;top:302.2px;width:144px;text-align:center;font-size:7.1px;line-height:8px;color:#000;white-space:normal">Supporting text here.<br>Supporting text here.</div>
<div class="t" style="left:200px;top:319px;width:138px;text-align:center;font-size:7px;color:#444;letter-spacing:0.75px">......</div>
<div class="t" style="left:346px;top:319px;width:139px;text-align:center;font-size:7px;color:#444;letter-spacing:0.75px">......</div>
<div class="t" style="left:500px;top:319px;width:144px;text-align:center;font-size:7px;color:#444;letter-spacing:0.75px">......</div>
<div class="t" style="left:203.5px;top:431px;font-size:5.3px;color:#7a7a7a">www.islide.cc <span style="letter-spacing:0.3px">「让PPT设计简单起来！」</span></div>
<div class="t" style="left:637px;top:431px;font-size:5.3px;color:#808080">6</div>
<svg class="a" style="left:673px;top:245px" width="10" height="16" viewBox="0 0 10 16">
<path d="M1.5 1.5v11l2.5-2.3 2 4.2 1.6-.8-2-4h3.4z" fill="#fff" stroke="#555" stroke-width="0.9"/>
</svg>
</body></html>
